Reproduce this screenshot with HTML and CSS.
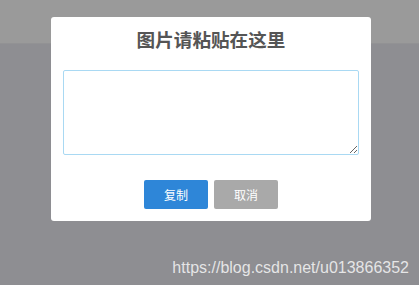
FILE: index.html
```html
<!DOCTYPE html>
<html>
<head>
	<meta charset="utf-8"/>
	<title>图片粘贴</title>
	<link rel="stylesheet" href="styles.css">
</head>
<body>
<div class="topbar"></div>
<div class="page"></div>

<div class="dialog">
	<h3 class="dtitle">图片请粘贴在这里</h3>
	<textarea class="paste"></textarea>
	<div class="btns">
		<button class="btn copy">复制</button>
		<button class="btn cancel">取消</button>
	</div>
</div>

<div class="mark">https://blog.csdn.net/u013866352</div>
</body>
</html>
```

FILE: styles.css
```css
html, body{
	margin: 0;
	height: 100%;
}
body{
	font-family: "Noto Sans CJK SC", "Noto Sans", sans-serif;
	background-color: #8e8e92;
	display: flex;
	flex-direction: column;
}
.topbar{
	height: 43px;
	background-color: #9a9a9a;
	border-bottom: 1px solid #929294;
}
.page{
	flex: 1;
}

.dialog{
	position: absolute;
	left: 51px;
	top: 17px;
	width: 320px;
	box-sizing: border-box;
	padding: 9px 12px 12px;
	background-color: #fff;
	border-radius: 3px;
	display: flex;
	flex-direction: column;
}
.dtitle{
	margin: 0;
	font-size: 18.6px;
	line-height: 25px;
	font-weight: bold;
	color: #555;
	text-align: center;
}
.paste{
	margin-top: 19px;
	width: 296px;
	height: 85px;
	box-sizing: border-box;
	border: 1px solid #a9d9f3;
	border-radius: 2px;
	outline: none;
	padding: 4px;
}
.btns{
	margin-top: 25px;
	display: flex;
	justify-content: center;
	gap: 6px;
}
.btn{
	width: 64px;
	height: 29px;
	border: none;
	border-radius: 2px;
	color: #fff;
	font-family: "Noto Sans CJK SC", sans-serif;
	font-size: 12px;
	padding: 0;
}
.copy{
	background-color: #2e86d8;
}
.cancel{
	background-color: #a9a9a9;
}

.mark{
	position: absolute;
	right: 10px;
	bottom: 8px;
	font-family: "Liberation Sans", Arial, sans-serif;
	font-size: 16px;
	color: rgba(255,255,255,0.78);
}
```
